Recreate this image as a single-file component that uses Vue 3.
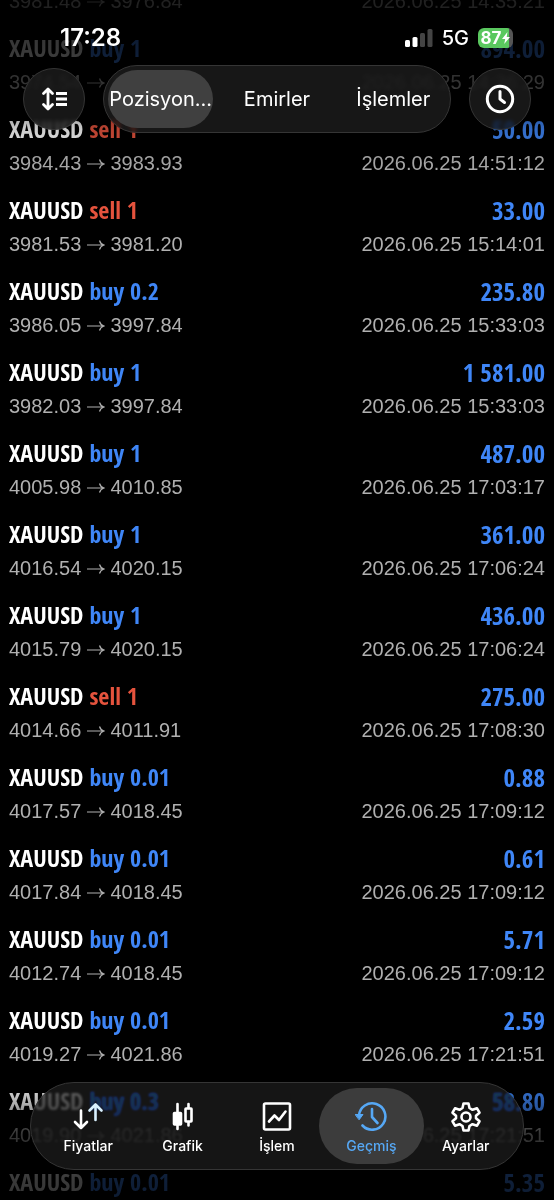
<script setup>
import { ref } from 'vue'

const trades = [
  { side: 'buy', volume: '1', from: '3981.48', to: '3976.84', time: '2026.06.25 14:35:21', profit: '464.00' },
  { side: 'buy', volume: '1', from: '3974.54', to: '3983.48', time: '2026.06.25 14:36:29', profit: '894.00' },
  { side: 'sell', volume: '1', from: '3984.43', to: '3983.93', time: '2026.06.25 14:51:12', profit: '50.00' },
  { side: 'sell', volume: '1', from: '3981.53', to: '3981.20', time: '2026.06.25 15:14:01', profit: '33.00' },
  { side: 'buy', volume: '0.2', from: '3986.05', to: '3997.84', time: '2026.06.25 15:33:03', profit: '235.80' },
  { side: 'buy', volume: '1', from: '3982.03', to: '3997.84', time: '2026.06.25 15:33:03', profit: '1 581.00' },
  { side: 'buy', volume: '1', from: '4005.98', to: '4010.85', time: '2026.06.25 17:03:17', profit: '487.00' },
  { side: 'buy', volume: '1', from: '4016.54', to: '4020.15', time: '2026.06.25 17:06:24', profit: '361.00' },
  { side: 'buy', volume: '1', from: '4015.79', to: '4020.15', time: '2026.06.25 17:06:24', profit: '436.00' },
  { side: 'sell', volume: '1', from: '4014.66', to: '4011.91', time: '2026.06.25 17:08:30', profit: '275.00' },
  { side: 'buy', volume: '0.01', from: '4017.57', to: '4018.45', time: '2026.06.25 17:09:12', profit: '0.88' },
  { side: 'buy', volume: '0.01', from: '4017.84', to: '4018.45', time: '2026.06.25 17:09:12', profit: '0.61' },
  { side: 'buy', volume: '0.01', from: '4012.74', to: '4018.45', time: '2026.06.25 17:09:12', profit: '5.71' },
  { side: 'buy', volume: '0.01', from: '4019.27', to: '4021.86', time: '2026.06.25 17:21:51', profit: '2.59' },
  { side: 'buy', volume: '0.3', from: '4019.90', to: '4021.86', time: '2026.06.25 17:21:51', profit: '58.80' },
  { side: 'buy', volume: '0.01', from: '4016.51', to: '4021.86', time: '2026.06.25 17:21:51', profit: '5.35' },
]
const segments = ['Pozisyon...', 'Emirler', 'İşlemler']
const segment = ref(0)
const tabs = ['Fiyatlar', 'Grafik', 'İşlem', 'Geçmiş', 'Ayarlar']
const tab = ref(3)
</script>

<template>
  <div class="screen">
    <main class="list">
      <article v-for="(t, i) in trades" :key="i" class="trade">
        <div class="line title">
          <span>XAUUSD <span :class="t.side">{{ t.side }} {{ t.volume }}</span></span>
          <span class="profit">{{ t.profit }}</span>
        </div>
        <div class="line detail">
          <span class="prices">{{ t.from }}
            <svg class="arrow" viewBox="0 0 18 12" aria-hidden="true"><path d="M0 6H17M12.500 1.500Q13.500 5 17 6Q13.500 7 12.500 10.500" /></svg>
            {{ t.to }}</span>
          <time>{{ t.time }}</time>
        </div>
      </article>
    </main>
    <div class="fade fade-top"></div>
    <div class="fade fade-bottom"></div>

    <header class="top">
      <div class="status">
        <time>17:28</time>
        <div class="indicators">
          <svg class="signal" viewBox="0 0 28 18" aria-hidden="true">
            <rect x="0" y="11" width="5" height="7" rx="1.500" /><rect x="7.500" y="8" width="5" height="10" rx="1.500" />
            <rect class="off" x="15" y="4" width="5" height="14" rx="1.500" /><rect class="off" x="22.500" y="0" width="5" height="18" rx="1.500" />
          </svg>
          <span>5G</span>
          <div class="battery">87<svg viewBox="0 0 8 12" aria-hidden="true"><path d="M5.500 0L0 7H3.200L2.200 12L8 5H4.700Z" /></svg></div>
        </div>
      </div>
      <div class="toolbar">
        <button class="glass round" aria-label="Sırala">
          <svg viewBox="0 0 26 24"><path d="M7 3V21M2.500 6.500L7 2L11.500 6.500M2.500 17.500L7 22L11.500 17.500" /><path class="bars" d="M15 6.500H26M15 12H26M15 17.500H26" /></svg>
        </button>
        <div class="glass segments">
          <button v-for="(s, i) in segments" :key="s" :class="{ active: segment === i }" @click="segment = i">{{ s }}</button>
        </div>
        <button class="glass round" aria-label="Dönem">
          <svg class="clock" viewBox="0 0 30 30"><circle cx="15" cy="15" r="12.700" /><path d="M15 7.500V15L19.500 18.500" /></svg>
        </button>
      </div>
    </header>

    <nav class="glass tabs">
      <button v-for="(name, i) in tabs" :key="name" :class="{ active: tab === i }" @click="tab = i">
        <svg v-if="i === 0" viewBox="0 0 32 32"><path d="M9 9.500V27M3 21L9 27L15 21" /><path class="tip" d="M23.500 19V3.500M17.500 9.500L23.500 3.500L29.500 9.500" /></svg>
        <svg v-else-if="i === 1" viewBox="0 0 32 32"><path d="M10.500 3V28M21.500 3V7M21.500 21V24.500" /><rect class="solid" x="7" y="12" width="7" height="11.500" rx="0.500" /><rect x="18.500" y="7.500" width="6" height="13" rx="0.500" /></svg>
        <svg v-else-if="i === 2" viewBox="0 0 32 32"><rect x="3" y="2.500" width="26" height="26" rx="1.500" /><path d="M8 20.500L13.500 14.500L18 19L24.500 10.500" /></svg>
        <svg v-else-if="i === 3" viewBox="0 0 32 32"><path d="M4 14.500A13.200 13.200 0 1 1 7.500 24.500" /><path class="solid tight" d="M0.500 13.500H8L4.300 18.500Z" /><path d="M17 8V16L22.500 22" /></svg>
        <svg v-else viewBox="0 0 32 32"><path d="M13.500 2.500H18.500L19.500 7L22.500 8.800L27 7.300L29.500 11.700L26 14.800V17.200L29.500 20.300L27 24.700L22.500 23.200L19.500 25L18.500 29.500H13.500L12.500 25L9.500 23.200L5 24.700L2.500 20.300L6 17.200V14.800L2.500 11.700L5 7.300L9.500 8.800L12.500 7Z" /><circle cx="16" cy="16" r="4.500" /></svg>
        <span>{{ name }}</span>
      </button>
    </nav>
  </div>
</template>

<style>
body { margin: 0; background: #000; }
</style>

<style scoped>
.screen { position: relative; height: 100vh; overflow: hidden; background: #000; color: #fff; font-family: Inter, "Noto Sans", sans-serif; }
.list { margin-top: -56px; }
.trade { padding: 7px 9px 5px; }
.line { display: flex; justify-content: space-between; white-space: nowrap; }
.title { line-height: 32px; font-family: "Open Sans Condensed", "Liberation Sans Narrow", "Roboto Condensed", "DejaVu Sans Condensed", sans-serif; font-size: 24px; font-weight: 700; }
.profit { font-size: 25px; }
.detail { line-height: 37px; font-family: "Liberation Sans", Arial, sans-serif; font-size: 20px; color: #b0b0b0; }
.buy, .profit { color: #3f86f7; }
.sell { color: #e5533d; }
.arrow { width: 18px; height: 12px; fill: none; stroke: currentColor; stroke-width: 1.2; }
.fade { position: absolute; left: 0; right: 0; pointer-events: none; }
.fade-top { top: 0; height: 180px; background: linear-gradient(rgba(0,0,0,.82), rgba(0,0,0,.78) 28%, rgba(0,0,0,.7) 48%, rgba(0,0,0,.2) 72%, transparent); }
.fade-bottom { bottom: 0; height: 130px; background: linear-gradient(transparent, rgba(0,0,0,.3) 25%, rgba(0,0,0,.7) 50%, rgba(0,0,0,.8)); }
.top { position: absolute; top: 0; left: 0; right: 0; }
.status { display: flex; justify-content: space-between; align-items: center; height: 65px; padding: 10px 41px 0 60px; box-sizing: border-box; font-size: 24px; font-weight: 600; }
.indicators { display: flex; align-items: center; gap: 9px; font-size: 20px; font-weight: 500; }
.signal { width: 28px; height: 18px; fill: #fff; }
.off { fill: #444; }
.battery { display: flex; align-items: center; justify-content: center; gap: 1px; width: 35px; height: 20px; border-radius: 6px; background: linear-gradient(90deg, #5ac85f 88%, #555 88%); font-size: 17px; font-weight: 700; }
.battery svg { width: 8px; height: 12px; fill: #fff; }
button { margin: 0; padding: 0; border: 0; background: none; color: inherit; font: inherit; }
.glass { box-sizing: border-box; background: rgba(27,27,27,.84); border: 1px solid #353535; backdrop-filter: blur(2px) saturate(2) brightness(1.3); }
.toolbar { display: flex; align-items: center; gap: 18px; padding: 0 23px; }
.round { flex: none; display: grid; place-items: center; width: 62px; height: 62px; border-radius: 50%; }
.round svg { width: 26px; height: 24px; fill: none; stroke: #fff; stroke-width: 2.8; stroke-linecap: round; stroke-linejoin: round; }
.round .bars { stroke-linecap: butt; }
.round .clock { width: 30px; height: 30px; stroke-width: 3; }
.segments { flex: 1; display: grid; grid-template-columns: repeat(3, 1fr); gap: 11px; height: 68px; padding: 4px; border-radius: 34px; font-size: 20px; }
.segments button { min-width: 0; border-radius: 30px; white-space: nowrap; }
.segments .active { background: #404040; }
.tabs { position: absolute; bottom: 30px; left: 30px; right: 30px; display: grid; grid-template-columns: repeat(5, 1fr); height: 88px; padding: 5px 10px; border-radius: 44px; background: rgba(27,27,27,.76); backdrop-filter: blur(1px) saturate(3) brightness(1.4); font-size: 14px; font-weight: 500; }
.tabs button { position: relative; display: flex; flex-direction: column; align-items: center; justify-content: center; gap: 4px; padding-top: 3px; }
.tabs button > * { position: relative; }
.tabs .active { color: #56a8f5; }
.tabs .active::before { content: ""; position: absolute; inset: 0 -5px; border-radius: 38px; background: #3c3c3c; }
.tabs svg { width: 32px; height: 32px; fill: none; stroke: currentColor; stroke-width: 2.6; stroke-linecap: round; stroke-linejoin: round; }
.tabs .solid { fill: currentColor; }
.tabs .tight { stroke-width: 1; }
.tabs .tip { stroke: #d9f1ff; }
</style>
